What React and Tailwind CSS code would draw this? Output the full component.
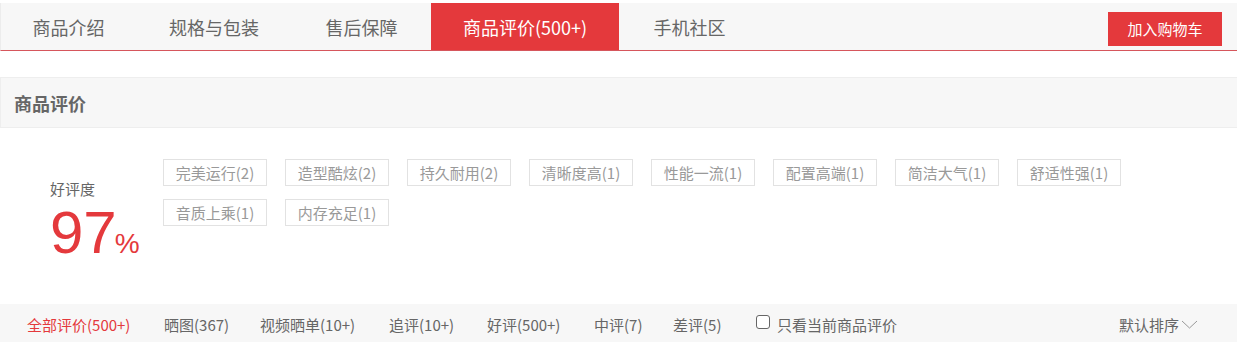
import React from "react";

const tabs = [
  { label: "商品介绍", w: "w-[135px]" },
  { label: "规格与包装", w: "w-[156px]" },
  { label: "售后保障", w: "w-[139px]" },
  { label: "商品评价(500+)", w: "w-[188px]", active: true },
  { label: "手机社区", w: "w-[141px]" },
];

const tags = [
  "完美运行(2)",
  "造型酷炫(2)",
  "持久耐用(2)",
  "清晰度高(1)",
  "性能一流(1)",
  "配置高端(1)",
  "简洁大气(1)",
  "舒适性强(1)",
  "音质上乘(1)",
  "内存充足(1)",
];

const filters = [
  { label: "全部评价(500+)", w: "w-[137px]", active: true },
  { label: "晒图(367)", w: "w-[96px]" },
  { label: "视频晒单(10+)", w: "w-[129px]" },
  { label: "追评(10+)", w: "w-[98px]" },
  { label: "好评(500+)", w: "w-[107px]" },
  { label: "中评(7)", w: "w-[79px]" },
  { label: "差评(5)", w: "w-[83px]" },
];

export default function App() {
  return (
    <div className="w-[1237px] h-[361px] bg-white font-['Noto_Sans_CJK_SC',sans-serif] overflow-hidden">
      {/* Tab bar */}
      <div className="mt-[3px] h-[48px] flex bg-[#f7f7f7] border-l border-[#ececec] border-b border-b-[#d6565c]">
        {tabs.map((t) => (
          <div
            key={t.label}
            className={`${t.w} h-[47px] flex items-center justify-center text-[18px] leading-[24px] ${
              t.active ? "bg-[#e4393c] text-white" : "text-[#666]"
            }`}
          >
            {t.label}
          </div>
        ))}
        <div className="ml-auto pr-[15px]">
          <div className="mt-[9px] w-[114px] h-[34px] bg-[#e4393c] text-white text-[15px] leading-[20px] flex items-center justify-center">
            加入购物车
          </div>
        </div>
      </div>

      {/* Section header */}
      <div className="mt-[26px] h-[51px] bg-[#f7f7f7] border border-[#eeeeee] border-r-0 flex items-center pl-[13px]">
        <span className="text-[18px] leading-[24px] font-bold text-[#666]">商品评价</span>
      </div>

      {/* Rating area */}
      <div className="h-[176px] flex pl-[50px]">
        <div className="w-[113px] pt-[50px]">
          <div className="text-[15px] leading-[21px] text-[#666]">好评度</div>
          <div className="mt-[4px] flex items-baseline text-[#e4393c] font-['Liberation_Sans',Arial,sans-serif]">
            <span className="text-[60px] leading-[60px]">97</span>
            <span className="text-[28px] leading-[28px] ml-[-2px]">%</span>
          </div>
        </div>
        <div className="pt-[31px] w-[1000px] flex flex-wrap content-start gap-x-[18px] gap-y-[13px]">
          {tags.map((t) => (
            <div
              key={t}
              className="w-[104px] h-[27px] border border-[#e2e2e2] flex items-center justify-center pt-[1px] text-[15px] leading-[20px] text-[#999]"
            >
              {t}
            </div>
          ))}
        </div>
      </div>

      {/* Filter bar */}
      <div className="h-[38px] bg-[#f7f7f7] flex items-center pl-[27px] pt-[3px] text-[15px] leading-[20px] text-[#666]">
        {filters.map((f) => (
          <div key={f.label} className={`${f.w} whitespace-nowrap ${f.active ? "text-[#e4393c]" : ""}`}>
            {f.label}
          </div>
        ))}
        <div className="flex items-center">
          <span className="w-[14px] h-[14px] border border-[#666] rounded-[3px] bg-white mt-[-5px]" />
          <span className="ml-[7px]">只看当前商品评价</span>
        </div>
        <div className="ml-auto pr-[39px] flex items-center">
          <span>默认排序</span>
          <svg width="17" height="9" viewBox="0 0 17 9" className="ml-[2px]">
            <polyline points="1,1 8.5,8 16,1" fill="none" stroke="#999" strokeWidth="1" />
          </svg>
        </div>
      </div>
    </div>
  );
}
